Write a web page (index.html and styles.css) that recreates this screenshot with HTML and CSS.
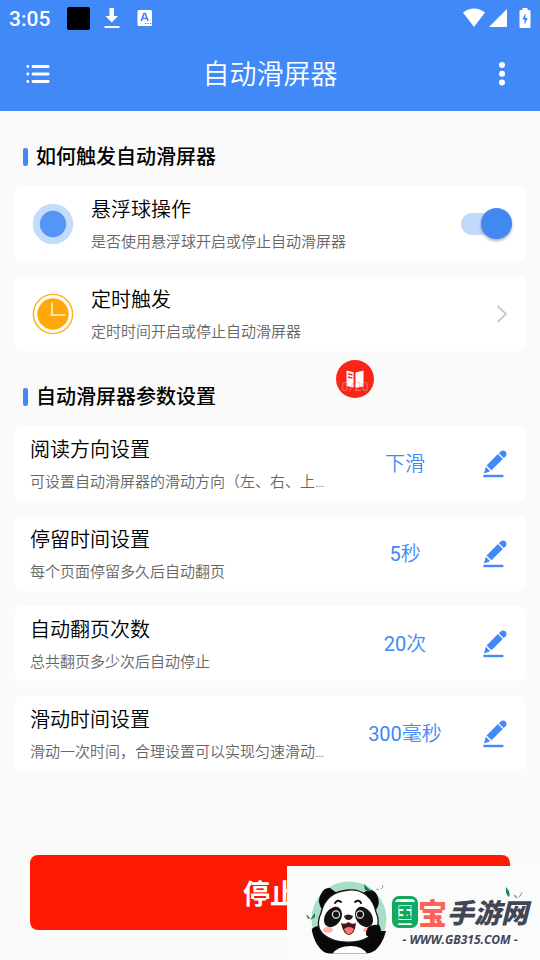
FILE: index.html
```html
<!DOCTYPE html>
<html lang="zh-CN">
<head>
<meta charset="utf-8">
<meta name="viewport" content="width=device-width, initial-scale=1">
<title>自动滑屏器</title>
<link rel="stylesheet" href="styles.css">
</head>
<body>
<svg class="sprite" aria-hidden="true">
  <symbol id="pencil" viewBox="0 0 24 28">
    <path d="M1 23.400 2.800 16.800 7.200 21.200Z"/>
    <path d="M3.600 15.400 14.900 4.100 19.800 9 8.500 20.300Z"/>
    <path d="M15.900 3.200 17.700 1.400Q20 -.6 22.400 1.600 24.600 4 22.600 6.200L20.700 8.100Z"/>
    <path d="M.4 24.800H20.400V27.200H.4Z"/>
  </symbol>
</svg>
<div class="screen">
  <header class="top">
    <div class="status">
      <span class="time">3:05</span>
      <span class="block"></span>
      <svg class="s-down" viewBox="0 0 16 22" fill="#fff"><path d="M5.500 1H10V9H14L7.800 15.500 1.500 9H5.500ZM.5 19H15.500V21H.5Z"/></svg>
      <svg class="s-key" viewBox="0 0 16 18"><rect x=".5" y="1" width="14.500" height="16" rx="1.500" fill="#fff"/><path d="M4.200 12 7 4.500H8.300L11 12M5.200 9.500H10" fill="none" stroke="#4189f7" stroke-width="1.700"/><path d="M8 14.500h1.300M10.500 14.500h1.300M13 14.500h1.300" stroke="#4189f7" stroke-width="1.200"/></svg>
      <span class="spring"></span>
      <svg class="s-wifi" viewBox="0 0 24 20" fill="#fff"><path d="M1 4.500Q12-3.500 23 4.500L12 19Z"/></svg>
      <svg class="s-cell" viewBox="0 0 20 20" fill="#fff"><path d="M19 1V19H1Z"/></svg>
      <svg class="s-bat" viewBox="0 0 12 22"><path d="M3.500 1H8.500V3H10.500Q11.500 3 11.500 4V20Q11.500 21 10.500 21H1.500Q.5 21 .5 20V4Q.5 3 1.500 3H3.500Z" fill="#fff"/><path d="M6.500 6 3.300 12.500H5.500V18L8.800 11H6.500Z" fill="#4189f7"/></svg>
    </div>
    <div class="bar">
      <button class="bar-btn" type="button" aria-label="菜单"><svg width="24" height="20" viewBox="0 0 24 20" fill="none" stroke="#fff" stroke-width="2.800" stroke-linecap="round"><path d="M7 2.500H22.200M7 10H22.200M7 17.500H22.200M1.800 2.500h.1M1.800 10h.1M1.800 17.500h.1"/></svg></button>
      <h1>自动滑屏器</h1>
      <button class="bar-btn" type="button" aria-label="更多"><svg width="6" height="24" viewBox="0 0 6 24" fill="#fff"><circle cx="3" cy="3" r="3"/><circle cx="3" cy="11.800" r="3"/><circle cx="3" cy="20.500" r="3"/></svg></button>
    </div>
  </header>

  <main>
    <h2>如何触发自动滑屏器</h2>
    <div class="card">
      <svg class="lead" viewBox="0 0 46 46"><circle cx="23" cy="23" r="20.200" fill="#c3dcfb"/><circle cx="23" cy="23" r="13.200" fill="#5595f8"/></svg>
      <label class="text" for="ball"><span class="name">悬浮球操作</span><span class="desc">是否使用悬浮球开启或停止自动滑屏器</span></label>
      <input class="switch" id="ball" type="checkbox" role="switch" checked>
    </div>
    <a class="card" href="#timer">
      <svg class="lead" viewBox="0 0 46 46"><circle cx="23" cy="23" r="19.600" fill="#fff" stroke="#fdb01c" stroke-width="1.400"/><circle cx="23" cy="23" r="15.700" fill="#ffa908"/><path d="M22 11.500V24.500M20.500 24H35.500" fill="none" stroke="#fff3d6" stroke-width="1.600"/></svg>
      <span class="text"><span class="name">定时触发</span><span class="desc">定时时间开启或停止自动滑屏器</span></span>
      <svg class="chev" viewBox="0 0 12 18" fill="none" stroke="#c8c8c8" stroke-width="1.800"><path d="M1.500 1 10 9 1.500 17"/></svg>
    </a>

    <h2>自动滑屏器参数设置</h2>
    <div class="card">
      <div class="text"><span class="name">阅读方向设置</span><span class="desc">可设置自动滑屏器的滑动方向（左、右、上…</span></div>
      <span class="value">下滑</span>
      <button class="edit" type="button" aria-label="编辑阅读方向"><svg><use href="#pencil"/></svg></button>
    </div>
    <div class="card">
      <div class="text"><span class="name">停留时间设置</span><span class="desc">每个页面停留多久后自动翻页</span></div>
      <span class="value"><span class="num">5</span>秒</span>
      <button class="edit" type="button" aria-label="编辑停留时间"><svg><use href="#pencil"/></svg></button>
    </div>
    <div class="card">
      <div class="text"><span class="name">自动翻页次数</span><span class="desc">总共翻页多少次后自动停止</span></div>
      <span class="value"><span class="num">20</span>次</span>
      <button class="edit" type="button" aria-label="编辑翻页次数"><svg><use href="#pencil"/></svg></button>
    </div>
    <div class="card">
      <div class="text"><span class="name">滑动时间设置</span><span class="desc">滑动一次时间，合理设置可以实现匀速滑动…</span></div>
      <span class="value"><span class="num">300</span>毫秒</span>
      <button class="edit" type="button" aria-label="编辑滑动时间"><svg><use href="#pencil"/></svg></button>
    </div>
    <button class="stop" type="button">停止</button>
  </main>

  <button class="float" type="button">
    <svg viewBox="0 0 38 38"><path d="M10.500 10.500 17.500 12.200V27.500L10.500 26Z M19.500 12.500 27.500 10.500V26.500L19.500 27.800Z" fill="#fff"/><path d="M12 13.800 16.500 15M12 17 16.500 18.200" stroke="#fb2418" stroke-width="1.300"/></svg>
    <span>0/20</span>
  </button>

  <aside class="brand">
    <svg class="panda" viewBox="0 0 84 82" aria-hidden="true">
      <defs><clipPath id="disc"><path d="M0 0H84V50C82 63 70 75.500 60 75.500H24C14 75.500 6 62 5 45Z"/></clipPath></defs>
      <g clip-path="url(#disc)"><circle cx="43" cy="41" r="37.500" fill="#a9dec6"/></g>
      <path d="M15 30Q11 22 15 16 18 9 24 10L31 15 20 33ZM57 15Q66 8 71 17 75 25 70 32L65 32Z" fill="#090909"/>
      <g clip-path="url(#disc)">
        <path d="M5 52Q12 44 18 53L29 62Q45 66 62 57 60 46 69 46 74 44 75 53L80 53Q76 70 62 78H22Q8 68 5 52Z" fill="#080808"/>
        <path d="M25 79Q29 68 45 68 58 68 63 79Z" fill="#fff"/>
      </g>
      <path d="M43 12C57 11 67 20 70 34 75 45 71 55 61 60 51 66 32 65 23 60 12 55 10 46 15 35 18 21 27 13 43 12Z" fill="#fff" stroke="#161616" stroke-width="1.300"/>
      <ellipse cx="27" cy="39" rx="8" ry="11" transform="rotate(35 27 39)" fill="#111"/>
      <ellipse cx="58" cy="39" rx="8" ry="11" transform="rotate(-35 58 39)" fill="#111"/>
      <g fill="#15110f" stroke="#e8e1dc" stroke-width="1.200"><circle cx="30" cy="36.500" r="3.600"/><circle cx="54" cy="36.500" r="3.600"/></g>
      <path d="M29 25Q32 21 35 24M49 24Q53 21 55 25" fill="none" stroke="#111" stroke-width="2" stroke-linecap="round"/>
      <ellipse cx="22" cy="52" rx="5" ry="3" fill="#ffb4a9"/><ellipse cx="62" cy="52" rx="5" ry="3" fill="#ffb4a9"/>
      <path d="M38 38Q42 35 47 38 46 42 42.500 42 39 42 38 38Z" fill="#2b1917"/>
      <path d="M35 45Q39 47 42.500 44 46 47 50 45 49 56 43 57 37 56 35 45Z" fill="#4b1515"/>
      <path d="M38 51Q43 47 48 51 46 56 43 56 40 56 38 51Z" fill="#ff7777"/>
      <path d="M60 57Q60 47 68 47 73 45 75 54L71 65Z" fill="#080808"/>
      <path d="M58 6 66 14 59 12ZM4 42 9 35 9 39ZM0 36 4 40 2 41Z" fill="#18744f"/>
      <path d="M70 11 73 12M76 7 77 9 75 11" fill="none" stroke="#8aa297"/>
    </svg>
    <div class="brand-text">
      <svg class="leaves" viewBox="0 0 20 12" aria-hidden="true"><path d="M2 0Q7 5 5 10 1 7 2 0Z" fill="#23855c"/><path d="M10 8Q12 8 13 11 11 11 10 8ZM18 5Q18 8 14 11" fill="#789b8c" stroke="#789b8c" stroke-width=".6"/></svg>
      <div class="brand-name"><span class="guo">国</span><span class="bao">宝</span><span>手游网</span></div>
      <div class="brand-url">- WWW.GB315.COM -</div>
    </div>
  </aside>
</div>
</body>
</html>
```
FILE: styles.css
```css
* { box-sizing: border-box; }

body {
  margin: 0;
  background: #fafafa;
  color: #000;
  font-family: Roboto, "Noto Sans CJK SC", sans-serif;
}

button {
  padding: 0;
  border: 0;
  background: none;
  color: inherit;
  font-family: inherit;
}

a { color: inherit; text-decoration: none; }
h1, h2 { margin: 0; }
svg { display: block; flex: none; }
.sprite { position: absolute; width: 0; height: 0; }

.screen {
  position: relative;
  display: flex;
  flex-direction: column;
  min-height: 100vh;
  overflow: hidden;
}

.top { background: #4189f7; color: #fff; }

.status {
  display: flex;
  align-items: center;
  height: 36px;
  padding: 0 9px;
}
.time { font-size: 21px; line-height: 24px; padding-top: 2px; font-weight: 500; width: 58px; }
.block { width: 23px; height: 23px; border-radius: 2px; background: #000; }
.s-down { width: 16px; height: 22px; margin-left: 14px; }
.s-key { width: 16px; height: 18px; margin-left: 17px; }
.spring { flex: 1; }
.s-wifi { width: 24px; height: 20px; }
.s-cell { width: 20px; height: 20px; margin: 0 11px 0 2px; }
.s-bat { width: 12px; height: 22px; }

.bar { display: flex; align-items: center; height: 75px; }
.bar-btn { width: 76px; height: 75px; display: grid; place-items: center; }
.bar h1 {
  flex: 1;
  padding-top: 2px;
  text-align: center;
  font-size: 27px;
  line-height: 36px;
  font-weight: 350;
}

main {
  flex: 1;
  display: flex;
  flex-direction: column;
  gap: 15px;
  padding: 30px 15px;
}

h2 {
  display: flex;
  align-items: center;
  gap: 8px;
  padding: 2px 0 0 8px;
  font-size: 20px;
  line-height: 28px;
  font-weight: 500;
}
h2::before {
  content: "";
  width: 5px;
  height: 18px;
  border-radius: 2px;
  background: #4189f7;
}
.card + h2 { margin-top: 15px; }

.card {
  display: flex;
  align-items: center;
  min-height: 75px;
  padding-left: 15px;
  border-radius: 6px;
  background: #fff;
}
.lead { width: 46px; height: 46px; margin-right: 15px; }
.text {
  flex: 1;
  min-width: 0;
  display: flex;
  flex-direction: column;
  gap: 6px;
}
.name { font-size: 20px; line-height: 30px; font-weight: 350; }
.desc {
  color: #666;
  font-size: 15px;
  line-height: 22px;
  font-weight: 350;
  white-space: nowrap;
}
.value {
  width: 120px;
  text-align: center;
  color: #4189f7;
  font-size: 20px;
  line-height: 30px;
  font-weight: 350;
}
.num { font-weight: 400; }
.edit { width: 60px; height: 75px; display: grid; place-items: center; fill: #4189f7; }
.edit svg { width: 24px; height: 28px; }
.chev { width: 12px; height: 18px; margin-right: 17px; }

.switch {
  appearance: none;
  position: relative;
  width: 51px;
  height: 22px;
  margin: 0 13px 0 0;
  border-radius: 11px;
  background: #c1d9fb;
}
.switch::before {
  content: "";
  position: absolute;
  top: -5px;
  right: 0;
  width: 31px;
  height: 31px;
  border-radius: 50%;
  background: #4189f0;
  box-shadow: 0 2px 3px rgba(0, 0, 0, 0.3);
}

.stop {
  height: 75px;
  margin: auto 15px 0;
  border-radius: 8px;
  background: #fd1a02;
  color: #fff;
  font-size: 27px;
  font-weight: 700;
}

.float {
  position: absolute;
  top: 360px;
  right: 166px;
  width: 38px;
  height: 38px;
  border-radius: 50%;
  background: #fb2418;
}
.float span {
  position: absolute;
  inset: 18px 0 auto;
  color: rgba(255, 150, 140, 0.6);
  font-size: 13px;
  line-height: 18px;
}

.brand {
  position: absolute;
  right: 0;
  bottom: 0;
  display: flex;
  width: 253px;
  height: 94px;
  padding: 12px 0 0 19px;
  background: #fbfbfb;
}
.panda { width: 84px; height: 82px; }
.brand-text {
  position: relative;
  padding: 14px 0 0 2px;
  color: #424654;
  font-family: "Noto Sans CJK SC", sans-serif;
  font-weight: 900;
  white-space: nowrap;
}
.leaves { position: absolute; top: 9px; right: 4px; width: 20px; height: 12px; }
.brand-name {
  display: flex;
  align-items: center;
  font-size: 27px;
  line-height: 40px;
  font-style: italic;
}
.guo {
  width: 26px;
  height: 32px;
  border: 3px solid #12a95d;
  border-radius: 7px;
  color: #12a95d;
  font-size: 24px;
  line-height: 26px;
  font-style: normal;
  display: flex;
  justify-content: center;
}
.bao { color: #fb6258; font-size: 29px; font-style: normal; }
.brand-url {
  text-align: center;
  font-family: "Open Sans", sans-serif;
  font-size: 12px;
  line-height: 16px;
  font-weight: 700;
  font-style: italic;
}
```
